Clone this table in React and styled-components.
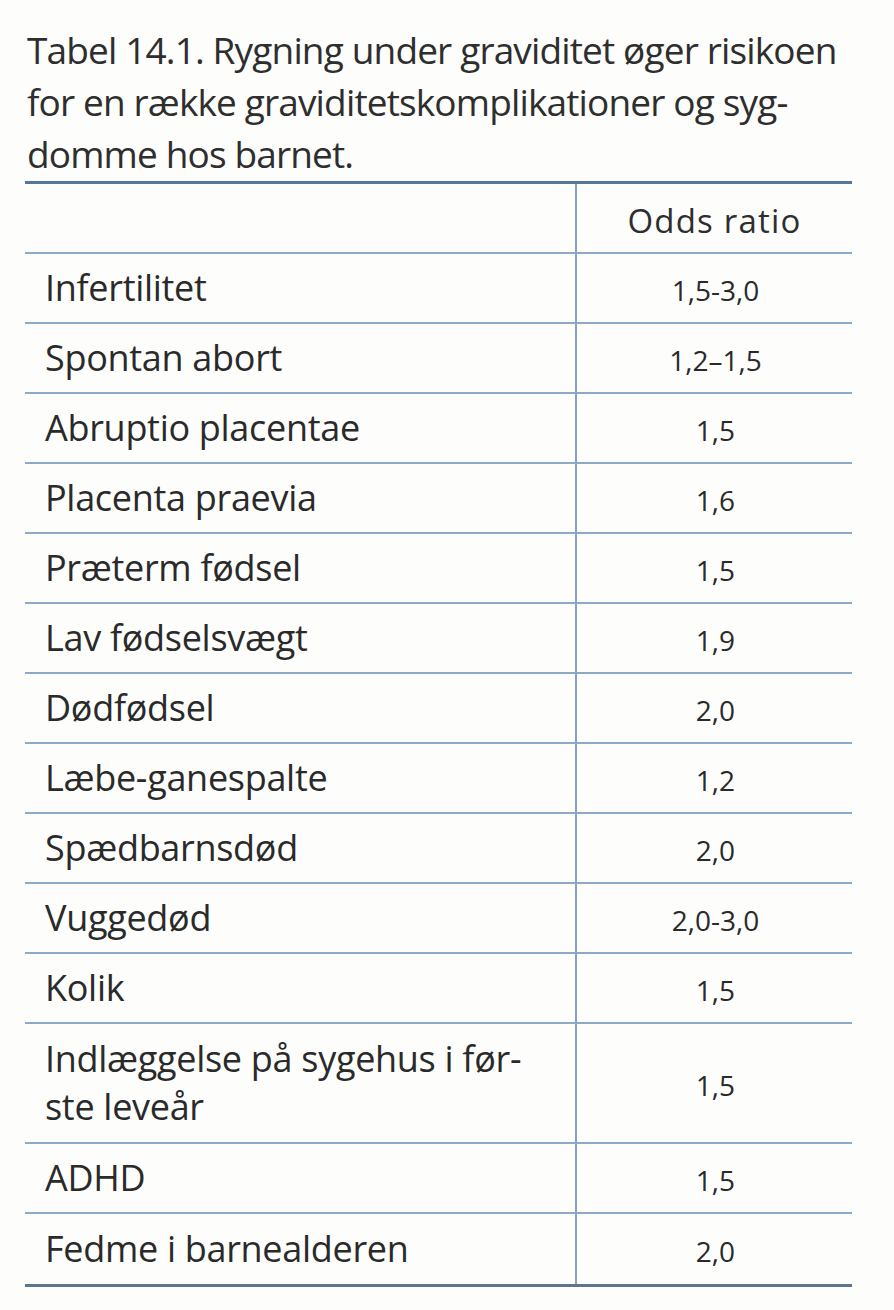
import React from "react";
import styled, { createGlobalStyle } from "styled-components";

const Global = createGlobalStyle`
  html, body { margin: 0; padding: 0; background: #fdfdfc; }
  body { font-family: "Open Sans", "Noto Sans", sans-serif; color: #2a2a2a; }
`;

const Page = styled.div`
  width: 894px;
  min-height: 1310px;
  box-sizing: border-box;
  padding: 24px 0 0 25px;
  background: #fdfdfc;
`;

const Caption = styled.div`
  padding-left: 2px;
  font-family: "Open Sans", "Noto Sans", sans-serif;
  font-size: 37px;
  letter-spacing: -0.85px;
  line-height: 52px;
  color: #2e2e2e;
  white-space: nowrap;
  height: 157px;
`;

const Table = styled.div`
  display: grid;
  grid-template-columns: 552px 275px;
  width: 827px;
  border-top: 3px solid #56769a;
  border-bottom: 3px solid #5d7690;
`;

const Cell = styled.div`
  box-sizing: border-box;
  height: ${(p) => p.$h || 70}px;
  display: flex;
  align-items: center;
  border-bottom: ${(p) => (p.$last ? "none" : "2px solid #8eaacb")};
  border-right: ${(p) => (p.$left ? "2px solid #86a2c2" : "none")};
`;

const Label = styled.div`
  padding-left: 20px;
  font-family: "Open Sans", "Noto Sans", sans-serif;
  font-size: 36px;
  line-height: 48px;
  color: #2a2a2a;
  letter-spacing: -0.3px;
`;

const Value = styled.div`
  width: 100%;
  text-align: center;
  font-family: "Open Sans", "Noto Sans", sans-serif;
  font-size: 28px;
  color: #2a2a2a;
  padding: 4px 0 0 2px;
`;

const Head = styled.div`
  width: 100%;
  text-align: center;
  font-family: "Open Sans", "Noto Sans", sans-serif;
  font-size: 33px;
  letter-spacing: 1.2px;
  color: #2e2e2e;
  padding-top: 4px;
`;

const rows = [
  ["Infertilitet", "1,5-3,0"],
  ["Spontan abort", "1,2–1,5"],
  ["Abruptio placentae", "1,5"],
  ["Placenta praevia", "1,6"],
  ["Præterm fødsel", "1,5"],
  ["Lav fødselsvægt", "1,9"],
  ["Dødfødsel", "2,0"],
  ["Læbe-ganespalte", "1,2"],
  ["Spædbarnsdød", "2,0"],
  ["Vuggedød", "2,0-3,0"],
  ["Kolik", "1,5"],
  [["Indlæggelse på sygehus i før-", "ste leveår"], "1,5", 120],
  ["ADHD", "1,5"],
  ["Fedme i barnealderen", "2,0"],
];

export default function App() {
  return (
    <Page>
      <Global />
      <Caption>
        Tabel 14.1. Rygning under graviditet øger risikoen
        <br />
        for en række graviditetskomplikationer og syg-
        <br />
        domme hos barnet.
      </Caption>
      <Table>
        <Cell $left />
        <Cell>
          <Head>Odds ratio</Head>
        </Cell>
        {rows.map(([label, value, h], i) => {
          const last = i === rows.length - 1;
          return (
            <React.Fragment key={i}>
              <Cell $left $h={h} $last={last}>
                <Label>
                  {Array.isArray(label)
                    ? label.map((l, j) => (
                        <React.Fragment key={j}>
                          {j > 0 && <br />}
                          {l}
                        </React.Fragment>
                      ))
                    : label}
                </Label>
              </Cell>
              <Cell $h={h} $last={last}>
                <Value>{value}</Value>
              </Cell>
            </React.Fragment>
          );
        })}
      </Table>
    </Page>
  );
}
